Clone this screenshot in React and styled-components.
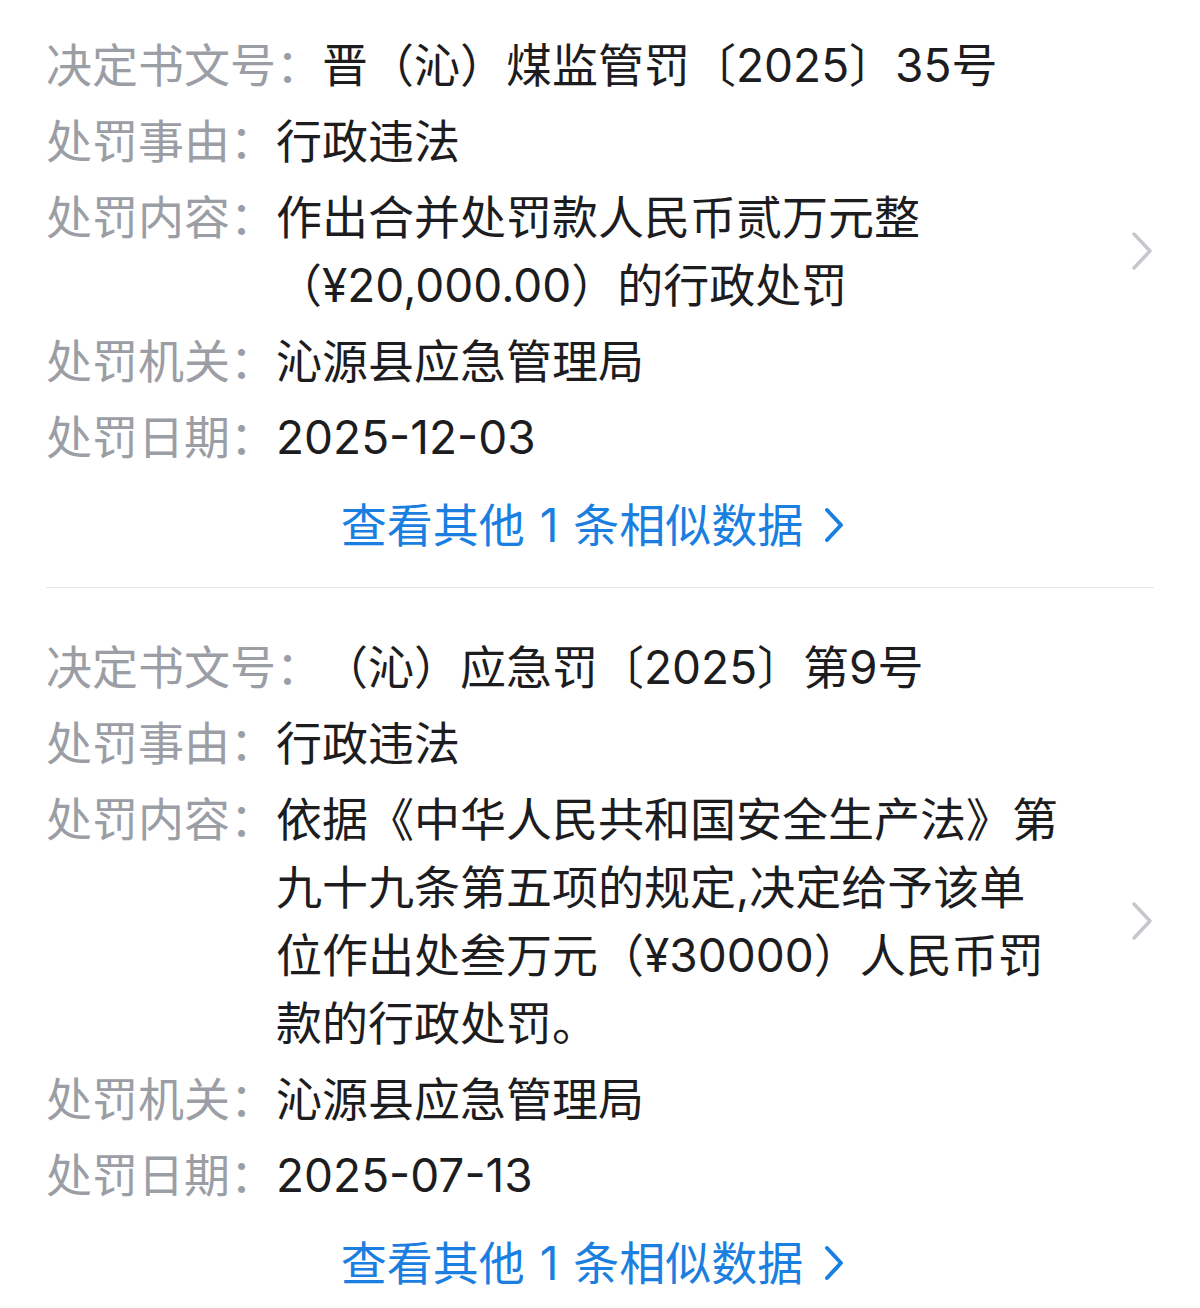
import styled, { createGlobalStyle } from "styled-components";

const GlobalStyle = createGlobalStyle`
  html, body {
    margin: 0;
    padding: 0;
    background: #ffffff;
  }
  body {
    font-family: Inter, "Noto Sans CJK SC", "Noto Sans", sans-serif;
    -webkit-font-smoothing: antialiased;
  }
`;

const Page = styled.div`
  width: 1200px;
  padding: 0 46px;
  box-sizing: border-box;
  background: #ffffff;
`;

const Card = styled.section`
  padding-top: ${(p) => (p.$first ? 31 : 45)}px;
  padding-bottom: 28px;
  border-bottom: ${(p) => (p.$last ? "none" : "1px solid #e6e6e8")};
`;

const Body = styled.div`
  display: flex;
  flex-direction: row;
  align-items: center;
`;

const Fields = styled.div`
  width: 1022px;
  display: flex;
  flex-direction: column;
  gap: 8px;
`;

const Row = styled.div`
  display: flex;
  flex-direction: row;
  align-items: flex-start;
  font-size: 46px;
  line-height: 68px;
`;

const Label = styled.span`
  flex: none;
  color: #9b9ea5;
  white-space: nowrap;
`;

const Value = styled.span`
  flex: 1;
  min-width: 0;
  color: #1d1d1f;
`;

const Arrow = styled.svg`
  flex: none;
  margin-left: auto;
  width: 24px;
  height: 42px;
`;

const More = styled.a`
  display: flex;
  flex-direction: row;
  align-items: center;
  justify-content: center;
  gap: 20px;
  margin-top: 20px;
  padding-right: 14px;
  font-size: 46px;
  line-height: 68px;
  color: #1a7fe0;
  text-decoration: none;
  cursor: pointer;
`;

const Num = styled.span`
  margin: 0 15px;
`;

const MoreArrow = styled.svg`
  width: 22px;
  height: 38px;
`;

const records = [
  {
    id: 1,
    fields: [
      ["决定书文号：", "晋（沁）煤监管罚〔2025〕35号"],
      ["处罚事由：", "行政违法"],
      ["处罚内容：", "作出合并处罚款人民币贰万元整（¥20,000.00）的行政处罚"],
      ["处罚机关：", "沁源县应急管理局"],
      ["处罚日期：", "2025-12-03"],
    ],
  },
  {
    id: 2,
    fields: [
      ["决定书文号：", "（沁）应急罚〔2025〕第9号"],
      ["处罚事由：", "行政违法"],
      [
        "处罚内容：",
        "依据《中华人民共和国安全生产法》第九十九条第五项的规定,决定给予该单位作出处叁万元（¥30000）人民币罚款的行政处罚。",
      ],
      ["处罚机关：", "沁源县应急管理局"],
      ["处罚日期：", "2025-07-13"],
    ],
  },
];

const ChevronRight = () => (
  <Arrow viewBox="0 0 24 42" fill="none">
    <path
      d="M4 4 L20 21 L4 38"
      stroke="#c5c7cc"
      strokeWidth="3.5"
      strokeLinecap="round"
      strokeLinejoin="round"
    />
  </Arrow>
);

const PenaltyCard = ({ record, first, last }) => (
  <Card $first={first} $last={last}>
    <Body>
      <Fields>
        {record.fields.map(([label, value]) => (
          <Row key={label}>
            <Label>{label}</Label>
            <Value>{value}</Value>
          </Row>
        ))}
      </Fields>
      <ChevronRight />
    </Body>
    <More>
      <span>
        查看其他<Num>1</Num>条相似数据
      </span>
      <MoreArrow viewBox="0 0 22 38" fill="none">
        <path
          d="M4 4 L18 19 L4 34"
          stroke="#1a7fe0"
          strokeWidth="4"
          strokeLinecap="round"
          strokeLinejoin="round"
        />
      </MoreArrow>
    </More>
  </Card>
);

const App = () => (
  <>
    <GlobalStyle />
    <Page>
      {records.map((r, i) => (
        <PenaltyCard
          key={r.id}
          record={r}
          first={i === 0}
          last={i === records.length - 1}
        />
      ))}
    </Page>
  </>
);

export default App;
